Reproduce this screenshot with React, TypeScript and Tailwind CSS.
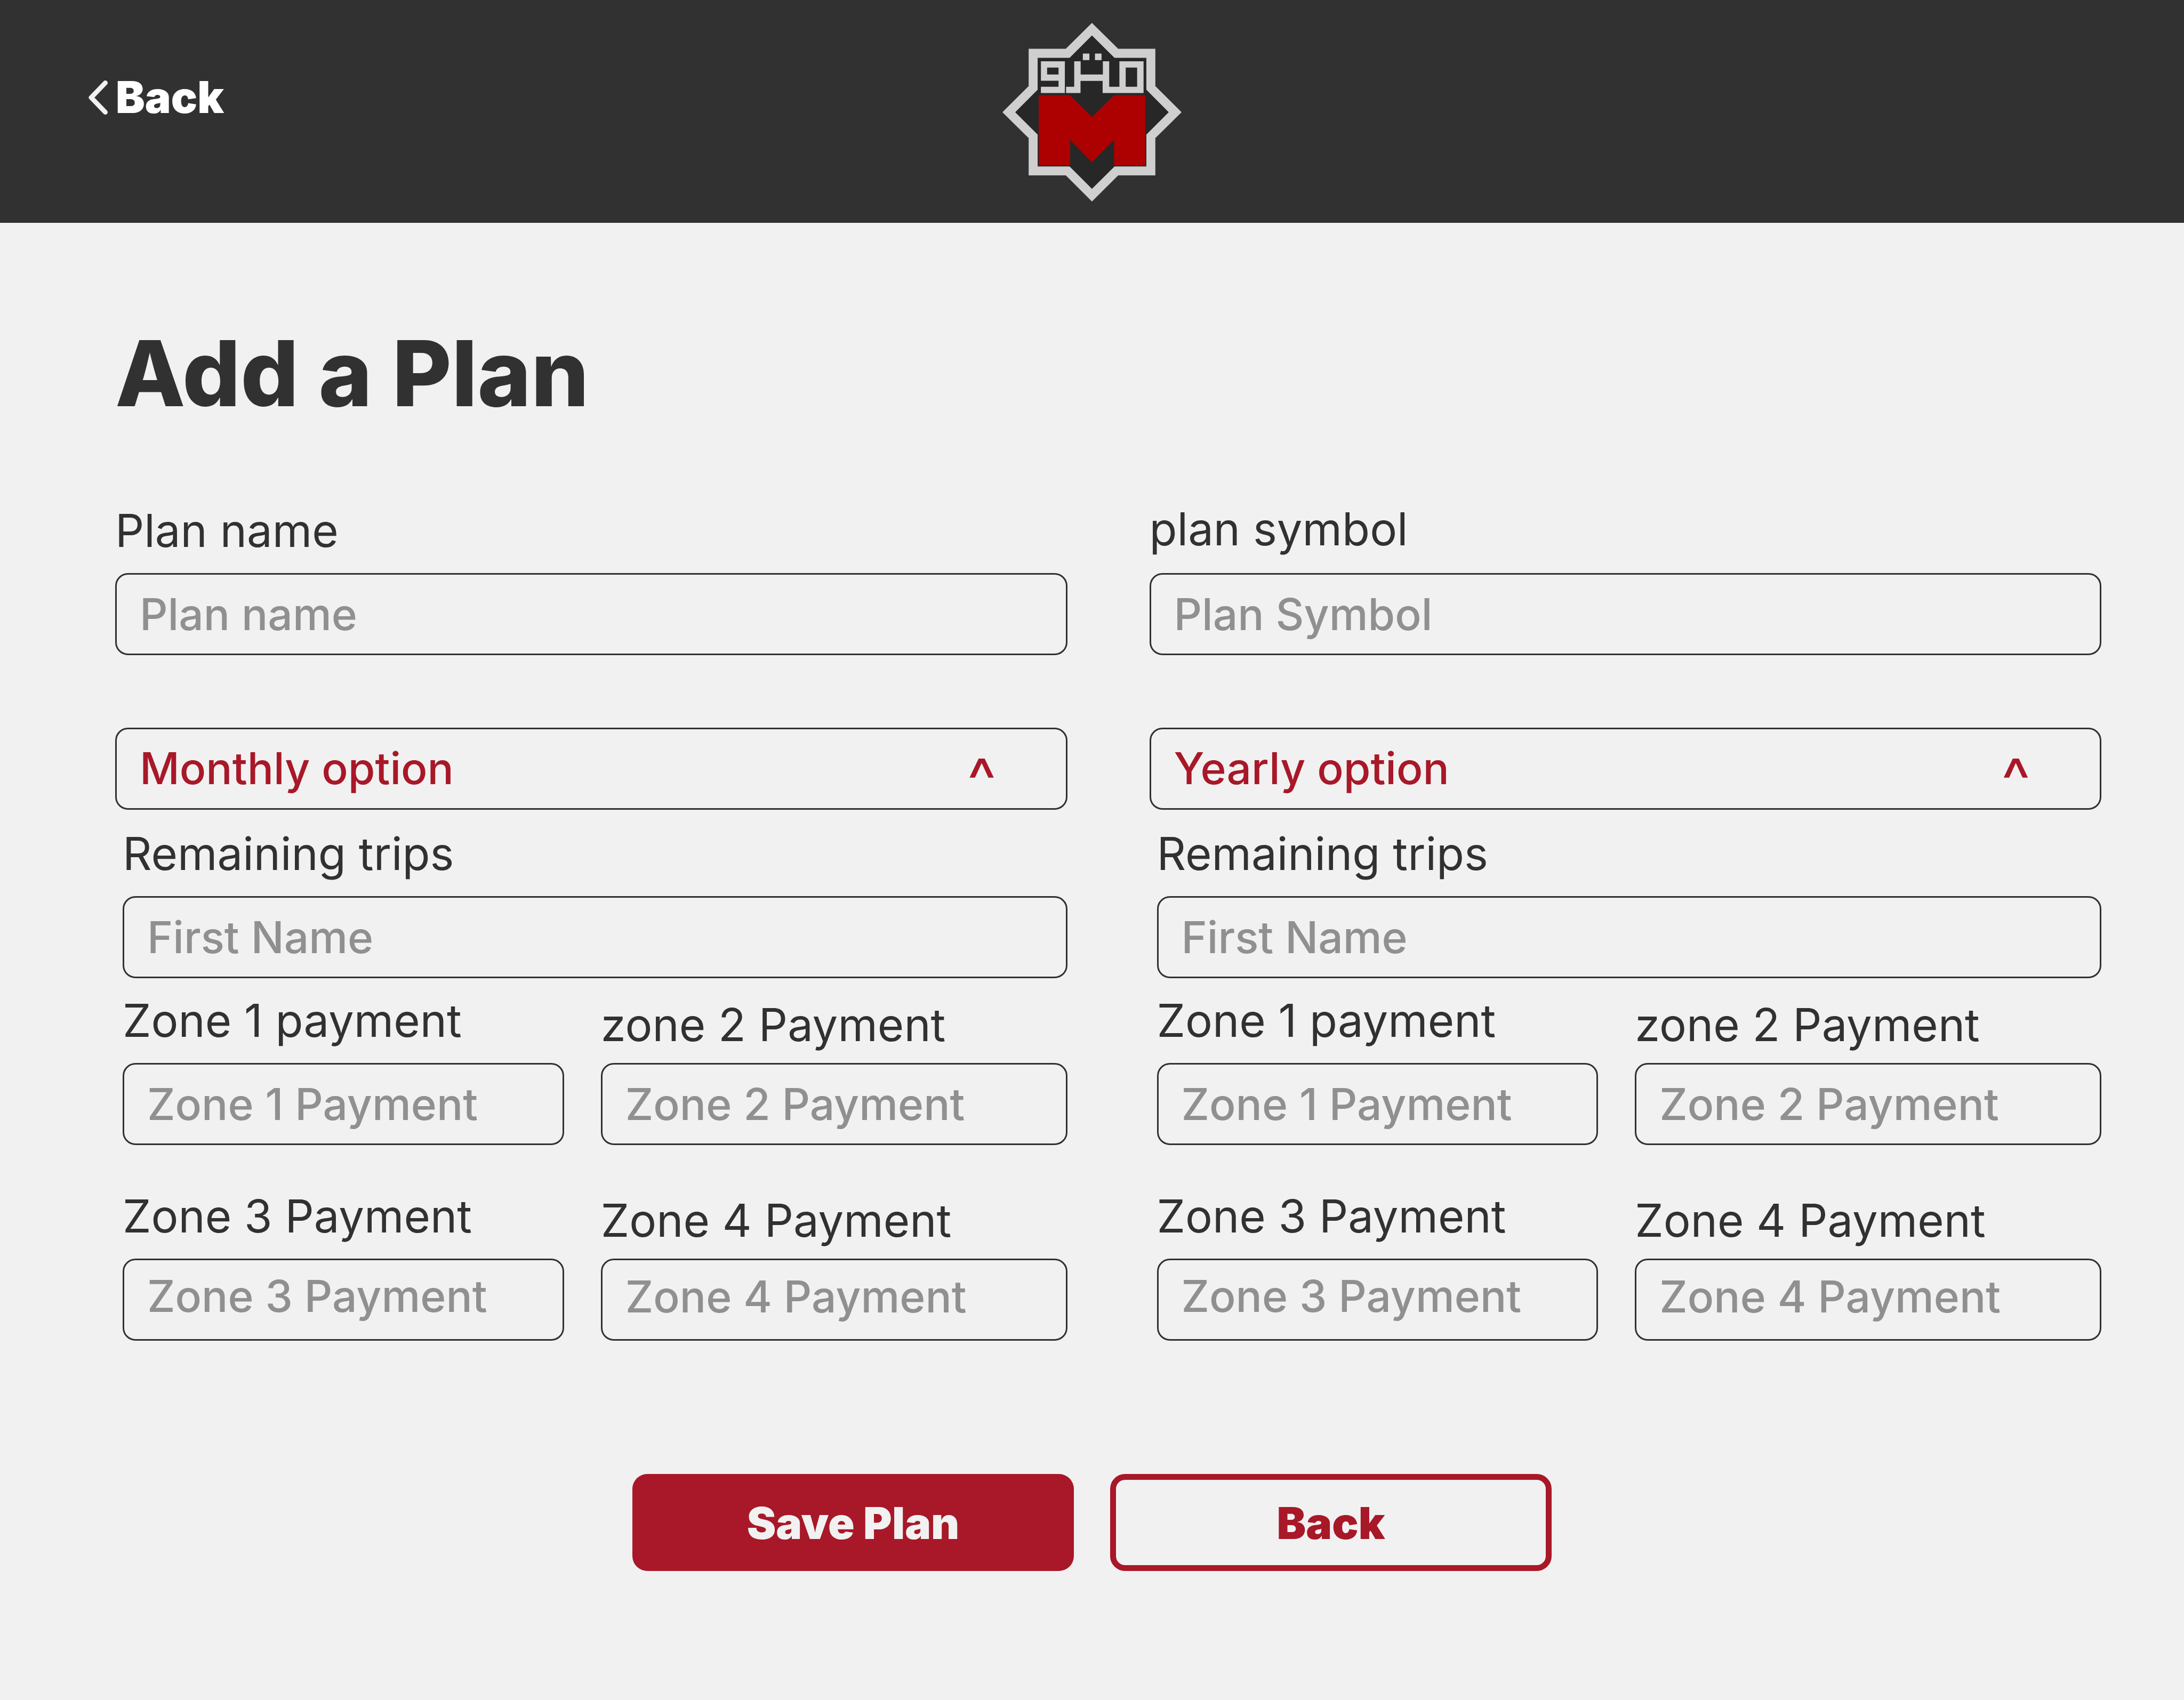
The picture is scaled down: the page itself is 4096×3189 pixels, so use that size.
import { useId } from "react";

type FieldProps = {
  label: string;
  placeholder: string;
  labelGap?: string;
  inputPadding?: string;
};

function Field({ label, placeholder, labelGap = "mb-[27px]", inputPadding = "" }: FieldProps) {
  const id = useId();
  return (
    <div className="flex min-w-0 flex-col">
      <label htmlFor={id} className={`text-[85px] leading-[104px] whitespace-nowrap ${labelGap}`}>
        {label}
      </label>
      <input
        id={id}
        type="text"
        placeholder={placeholder}
        className={`h-[154px] w-full rounded-[24px] border-[3px] border-[#313131] bg-transparent px-[43px] text-[82px] font-medium placeholder:text-[#909090] placeholder:opacity-100 ${inputPadding}`}
      />
    </div>
  );
}

function PlanOption({ title }: { title: string }) {
  return (
    <section className="flex min-w-0 flex-col">
      <button
        type="button"
        aria-expanded="true"
        className="flex h-[154px] items-center justify-between rounded-[24px] border-[3px] border-[#313131] pr-[130px] pl-[43px] text-[82px] leading-[100px] font-medium text-[#a81828]"
      >
        <span>{title}</span>
        <span aria-hidden="true" className="pt-[42px] text-[116px] font-normal">
          ^
        </span>
      </button>
      <div className="flex flex-col pt-[31px] pl-[14px]">
        <Field label="Remaining trips" placeholder="First Name" />
        <div className="mt-[28px] grid grid-cols-[828fr_875fr] items-end gap-x-[69px] gap-y-[82px]">
          <Field label="Zone 1 payment" placeholder="Zone 1 Payment" />
          <Field label="zone 2 Payment" placeholder="Zone 2 Payment" labelGap="mb-[19px]" />
          <Field label="Zone 3 Payment" placeholder="Zone 3 Payment" inputPadding="pb-[14px]" />
          <Field
            label="Zone 4 Payment"
            placeholder="Zone 4 Payment"
            labelGap="mb-[19px]"
            inputPadding="pb-[12px]"
          />
        </div>
      </div>
    </section>
  );
}

function Logo() {
  return (
    <svg
      viewBox="43 68 1475 1451"
      preserveAspectRatio="none"
      className="h-[335px] w-[336px]"
      role="img"
      aria-label="Metro"
    >
      <path
        fill="#cfcfcf"
        d="M780 68 996 278H1302V581L1518 793 1302 1004V1307H996L780 1519 565 1307H259V1004L43 793 259 581V278H565Z"
      />
      <path
        fill="#272727"
        d="M780 170 966 352H1228V610L1412 793 1228 975V1234H966L780 1416 596 1234H333V975L148 793 333 610V352H596Z"
      />
      <path fill="#ad0000" d="M342 655H598L780 833 963 655H1219V1225H962V1018L780 1201 600 1018V1225H342Z" />
      <g fill="#cfcfcf" fillRule="evenodd">
        <path d="M360 380H557V638H360V587H505V538H360ZM411 431V487H505V431Z" />
        <path d="M634 380H687V487H870V380H922V587H1006V380H1205V638H868V539H686V638H567V587H634ZM1058 431V587H1152V431Z" />
        <path d="M705 317H759V370H705ZM805 317H859V370H805Z" />
      </g>
    </svg>
  );
}

export default function App() {
  return (
    <div className="min-h-screen bg-[#f1f1f1] font-['Inter',sans-serif] text-[#313131]">
      <header className="grid h-[418px] grid-cols-[1fr_auto_1fr] items-center bg-[#313131] pt-[3px]">
        <a
          href="#"
          className="flex items-center gap-[15px] justify-self-start pb-[56px] pl-[166px] text-[82px] leading-[100px] font-black text-white"
        >
          <svg viewBox="0 0 36 64" className="h-[64px] w-[36px]" fill="none" aria-hidden="true">
            <path
              d="M31.5 4.5 5 32 31.5 59.5"
              stroke="#f1f1f1"
              strokeWidth="9"
              strokeLinecap="round"
              strokeLinejoin="round"
            />
          </svg>
          Back
        </a>
        <Logo />
      </header>

      <main className="pt-[178px] pr-[155px] pb-[240px] pl-[216px]">
        <h1 className="text-[171px] leading-[208px] font-extrabold">Add a Plan</h1>
        <form className="mt-[137px]">
          <div className="grid grid-cols-2 items-end gap-x-[154px] gap-y-[136px]">
            <Field label="Plan name" placeholder="Plan name" />
            <Field label="plan symbol" placeholder="Plan Symbol" labelGap="mb-[30px]" />
            <PlanOption title="Monthly option" />
            <PlanOption title="Yearly option" />
          </div>
          <div className="-ml-[61px] mt-[250px] flex justify-center gap-[68px] text-[82px] leading-[100px] font-black">
            <button
              type="button"
              className="h-[182px] w-[828px] rounded-[28px] bg-[#a81828] pt-[4px] text-[#f1f1f1]"
            >
              Save Plan
            </button>
            <button
              type="button"
              className="h-[182px] w-[828px] rounded-[28px] border-[11px] border-[#a81828] pt-[4px] text-[#a81828]"
            >
              Back
            </button>
          </div>
        </form>
      </main>
    </div>
  );
}
